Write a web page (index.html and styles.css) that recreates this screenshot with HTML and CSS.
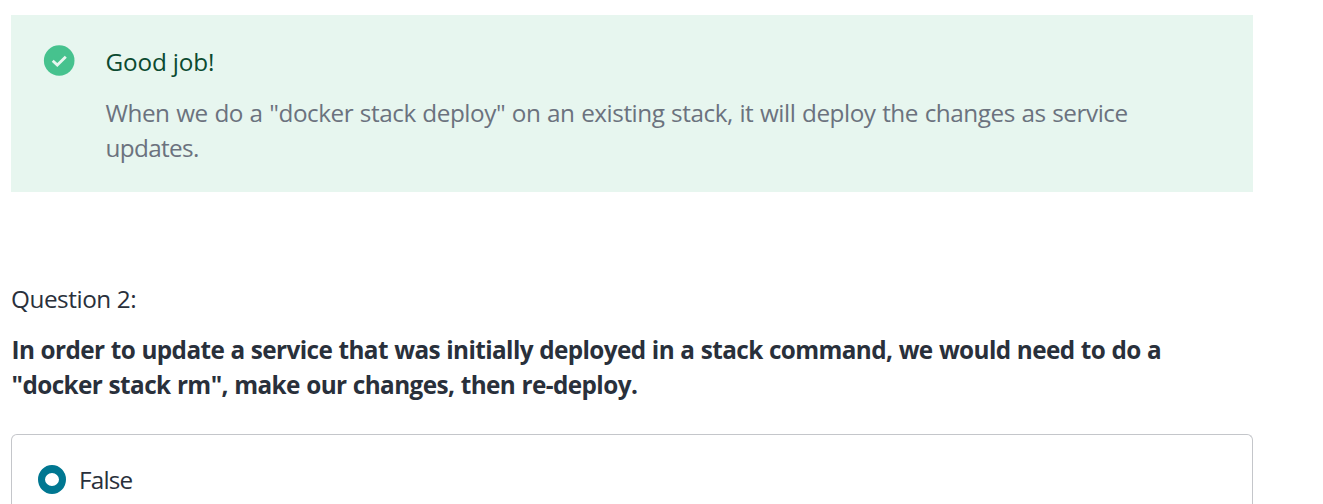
FILE: index.html
```html
<!DOCTYPE html>
<html lang="en">
<head>
<meta charset="utf-8">
<title>Quiz</title>
<link rel="stylesheet" href="styles.css">
</head>
<body>
<main class="quiz">
  <section class="alert">
    <svg class="alert-icon" viewBox="0 0 31 31" aria-hidden="true"><circle cx="15.2" cy="15.5" r="15.3"/><path d="M8.7 15.7l4.6 4.4 8.5-8.4"/></svg>
    <div class="alert-body">
      <p class="alert-title"><span class="line">Good job!</span></p>
      <p class="alert-text"><span class="line explanation">When we do a "docker stack deploy" on an existing stack, it will deploy the changes as service</span><span class="line tight">updates.</span></p>
    </div>
  </section>
  <p class="question-number"><span class="line">Question 2:</span></p>
  <h2 class="question"><span class="line">In order to update a service that was initially deployed in a stack command, we would need to do a</span><span class="line question-end">"docker stack rm", make our changes, then re-deploy.</span></h2>
  <label class="answer"><span class="radio"></span><span class="line answer-label">False</span></label>
</main>
</body>
</html>
```
FILE: styles.css
```css
* { box-sizing: border-box; }
html, body { margin: 0; background: #fff; }
body { font-family: "Open Sans", "Noto Sans", sans-serif; font-size: 24.3px; line-height: 35px; color: #29303b; }
p, h2 { margin: 0; }
.quiz { width: 1242px; height: 504px; margin-left: 11px; padding-top: 15px; overflow: hidden; }
.alert { display: flex; height: 177px; padding: 29px 32px 0; background: #e7f6ef; }
.alert-icon { width: 31px; height: 31px; flex: none; margin: 1px 30.5px 0 1px; overflow: visible; }
.alert-icon circle { fill: #46c28e; }
.alert-icon path { fill: none; stroke: #e7f6ef; stroke-width: 2.8; }
.line { display: block; width: max-content; white-space: nowrap; }
.alert-title { color: #0b4a30; letter-spacing: -0.15px; }
.alert-text { margin-top: 16px; color: #6b727e; }
.explanation { letter-spacing: -0.46px; word-spacing: 0.8px; }
.tight { letter-spacing: -0.65px; }
.question-number { margin-top: 89px; letter-spacing: -0.44px; }
.question { margin-top: 16px; padding-left: 0.5px; font-size: 24.3px; font-weight: 700; letter-spacing: -0.6px; word-spacing: 0.6px; }
.question-end { letter-spacing: -0.58px; }
.answer { display: flex; align-items: flex-start; height: 70px; margin-top: 32px; padding: 27px 26px 0; border: 1px solid #c4c6ca; border-bottom: 0; border-radius: 6px 6px 0 0; }
.radio { width: 28px; height: 29px; flex: none; margin: 3px 13px 0 0; border: solid #007791; border-width: 8px 7px; border-radius: 50%; }
.answer-label { letter-spacing: -0.8px; }
```
